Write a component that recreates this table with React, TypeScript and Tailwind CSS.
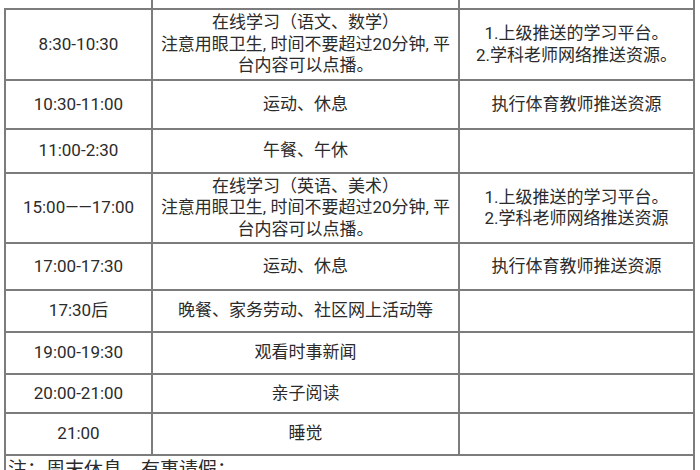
import React from "react";

type Row = { time: string; act: string[]; res: string[]; h: number };

const rows: Row[] = [
  {
    time: "8:30-10:30",
    act: ["在线学习（语文、数学）", "注意用眼卫生, 时间不要超过20分钟, 平", "台内容可以点播。"],
    res: ["1.上级推送的学习平台。", "2.学科老师网络推送资源。"],
    h: 69,
  },
  { time: "10:30-11:00", act: ["运动、休息"], res: ["执行体育教师推送资源"], h: 47 },
  { time: "11:00-2:30", act: ["午餐、午休"], res: [], h: 42 },
  {
    time: "15:00——17:00",
    act: ["在线学习（英语、美术）", "注意用眼卫生, 时间不要超过20分钟, 平", "台内容可以点播。"],
    res: ["1.上级推送的学习平台。", "2.学科老师网络推送资源"],
    h: 68,
  },
  { time: "17:00-17:30", act: ["运动、休息"], res: ["执行体育教师推送资源"], h: 45 },
  { time: "17:30后", act: ["晚餐、家务劳动、社区网上活动等"], res: [], h: 40 },
  { time: "19:00-19:30", act: ["观看时事新闻"], res: [], h: 40 },
  { time: "20:00-21:00", act: ["亲子阅读"], res: [], h: 37 },
  { time: "21:00", act: ["睡觉"], res: [], h: 40 },
];

function Cell({ lines, h }: { lines: string[]; h: number }) {
  return (
    <div
      className="bg-white flex flex-col items-center justify-center text-center whitespace-nowrap overflow-visible leading-[21.5px]"
      style={{ height: h }}
    >
      {lines.map((l, i) => (
        <div key={i}>{l}</div>
      ))}
    </div>
  );
}

export default function App() {
  return (
    <div
      className="w-[700px] h-[470px] overflow-hidden bg-white text-[17px] text-[#2b2b2b]"
      style={{ fontFamily: "Roboto, 'Noto Sans CJK SC', sans-serif" }}
    >
      <div className="ml-[4px] w-[691px] grid grid-cols-[145px_305px_233px] gap-[2px] bg-[#7c7c7c] px-[2px]">
        <div className="bg-white h-[8px] -ml-[2px]" />
        <div className="bg-white h-[8px]" />
        <div className="bg-white h-[8px]" />
        {rows.map((r, i) => (
          <React.Fragment key={i}>
            <Cell lines={[r.time]} h={r.h} />
            <Cell lines={r.act} h={r.h} />
            <Cell lines={r.res} h={r.h} />
          </React.Fragment>
        ))}
        <div className="col-span-3 bg-white h-[40px] pt-[4px] pl-[2px] text-[19px] leading-none">
          注：周末休息，有事请假：
        </div>
      </div>
    </div>
  );
}
